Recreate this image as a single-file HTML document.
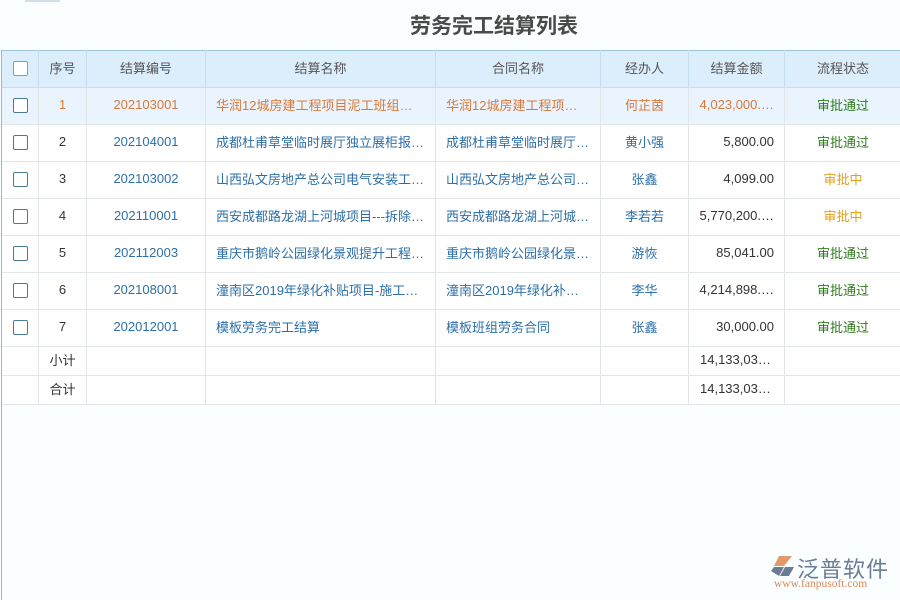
<!DOCTYPE html>
<html><head><meta charset="utf-8"><style>
body{margin:0;width:900px;height:600px;background:#fbfeff;position:relative;overflow:hidden;font-family:"Liberation Sans","Noto Sans CJK SC",sans-serif;}
.title{position:absolute;left:0;width:988px;top:10px;text-align:center;font-size:21px;font-weight:bold;color:#4a4a4a;}
.lb{position:absolute;left:1px;top:50px;width:1px;height:550px;background:#8ebdd0;}
table{position:absolute;left:1px;top:50px;border-collapse:collapse;table-layout:fixed;width:900px;font-size:13px;}
td,th{border:1px solid #e1e6ea;text-align:center;white-space:nowrap;overflow:hidden;padding:0 0 3px 0;}
th{background:#dcedfb;height:33px;font-weight:normal;color:#555;border-color:#c6dded;}
tr.h th{border-top:1px solid #9cc3da;}
tr.r td{height:33px;background:#fff;}
tr.r1 td{background:#e9f4fe;}
tr.s td{height:25px;background:#fff;color:#333;}
.cb{display:inline-block;width:13px;height:13px;border:1px solid #4a7a94;border-radius:2px;vertical-align:middle;background:#fff;}
th .cb{border-color:#7aa0b6;}
.l{text-align:left;padding-left:10px;}
.rt{text-align:right;padding-right:10px;}
.b{color:#2d6fa8;}.k{color:#333;}.o{color:#d9793a;}
.g{color:#2f7d1d;}.y{color:#e0a020;}
.logo{position:absolute;left:770px;top:553px;}
</style></head><body>
<div style="position:absolute;left:25px;top:0;width:35px;height:2px;background:#cfe0ea"></div>
<div class="title">劳务完工结算列表</div>
<table>
<colgroup><col style="width:37px"><col style="width:48px"><col style="width:119px"><col style="width:230px"><col style="width:165px"><col style="width:88px"><col style="width:96px"><col style="width:117px"></colgroup>
<tr class="h"><th><span class="cb"></span></th><th>序号</th><th>结算编号</th><th>结算名称</th><th>合同名称</th><th>经办人</th><th>结算金额</th><th>流程状态</th></tr>
<tr class="r r1 o"><td><span class="cb"></span></td><td>1</td><td>202103001</td><td class="l">华润12城房建工程项目泥工班组…</td><td class="l">华润12城房建工程项…</td><td>何芷茵</td><td class="rt">4,023,000.…</td><td class="g">审批通过</td></tr>
<tr class="r"><td><span class="cb"></span></td><td class="k">2</td><td class="b">202104001</td><td class="l b">成都杜甫草堂临时展厅独立展柜报…</td><td class="l b">成都杜甫草堂临时展厅…</td><td class="b">黄小强</td><td class="rt k">5,800.00</td><td class="g">审批通过</td></tr>
<tr class="r"><td><span class="cb"></span></td><td class="k">3</td><td class="b">202103002</td><td class="l b">山西弘文房地产总公司电气安装工…</td><td class="l b">山西弘文房地产总公司…</td><td class="b">张鑫</td><td class="rt k">4,099.00</td><td class="y">审批中</td></tr>
<tr class="r"><td><span class="cb"></span></td><td class="k">4</td><td class="b">202110001</td><td class="l b">西安成都路龙湖上河城项目---拆除…</td><td class="l b">西安成都路龙湖上河城…</td><td class="b">李若若</td><td class="rt k">5,770,200.…</td><td class="y">审批中</td></tr>
<tr class="r"><td><span class="cb"></span></td><td class="k">5</td><td class="b">202112003</td><td class="l b">重庆市鹅岭公园绿化景观提升工程…</td><td class="l b">重庆市鹅岭公园绿化景…</td><td class="b">游恢</td><td class="rt k">85,041.00</td><td class="g">审批通过</td></tr>
<tr class="r"><td><span class="cb"></span></td><td class="k">6</td><td class="b">202108001</td><td class="l b">潼南区2019年绿化补贴项目-施工…</td><td class="l b">潼南区2019年绿化补…</td><td class="b">李华</td><td class="rt k">4,214,898.…</td><td class="g">审批通过</td></tr>
<tr class="r"><td><span class="cb"></span></td><td class="k">7</td><td class="b">202012001</td><td class="l b">模板劳务完工结算</td><td class="l b">模板班组劳务合同</td><td class="b">张鑫</td><td class="rt k">30,000.00</td><td class="g">审批通过</td></tr>
<tr class="s"><td></td><td>小计</td><td></td><td></td><td></td><td></td><td class="l" style="padding-left:11px">14,133,03…</td><td></td></tr>
<tr class="s"><td></td><td>合计</td><td></td><td></td><td></td><td></td><td class="l" style="padding-left:11px">14,133,03…</td><td></td></tr>
</table>
<div class="lb"></div>
<div class="logo">
<svg width="26" height="22" style="position:absolute;left:0;top:2px"><path d="M9 1 L22 1 L14 11 L4 11 Z" fill="#e29a6c"/><path d="M4 12 L14 12 L9 21 L1 16 Z" fill="#6b7d96"/><path d="M15 12 L24 12 L19 21 L10 21Z" fill="#6b7d96"/></svg>
<div style="position:absolute;left:27px;top:-1px;font-size:22px;color:#6b7d96;white-space:nowrap;letter-spacing:1px">泛普软件</div>
<div style="position:absolute;left:4px;top:25px;font-size:11.5px;color:#d98a5a;font-family:'Liberation Serif',serif;white-space:nowrap">www.fanpusoft.com</div>
</div>
</body></html>
